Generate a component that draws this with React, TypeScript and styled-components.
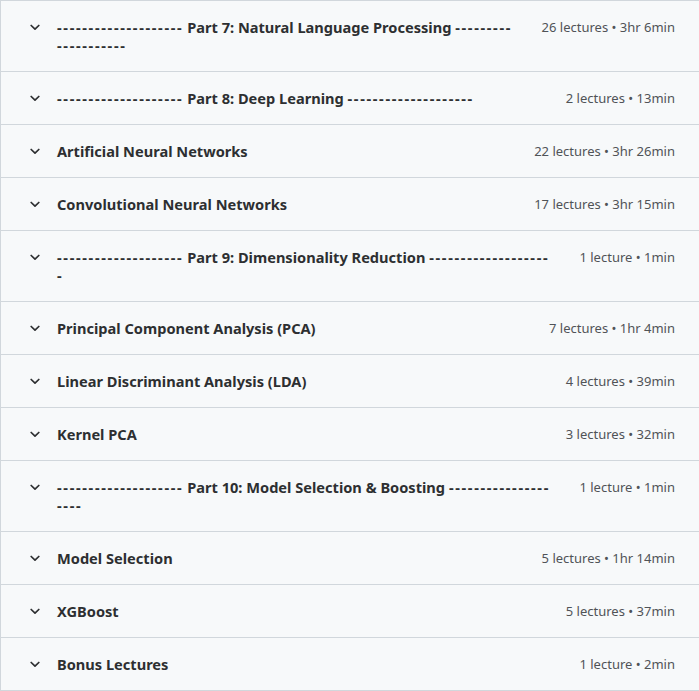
import React from "react";
import styled, { createGlobalStyle } from "styled-components";

const Global = createGlobalStyle`
  html, body { margin: 0; padding: 0; background: #ffffff; }
  body { font-family: "Noto Sans", "Open Sans", sans-serif; }
`;

const List = styled.div`
  width: 699px;
  box-sizing: border-box;
  border-top: 1px solid #d1d7dc;
  border-left: 1px solid #d1d7dc;
  background: #f7f9fa;
`;

const Row = styled.div`
  display: flex;
  align-items: flex-start;
  box-sizing: border-box;
  padding: 17px 24px 17px 29px;
  border-bottom: 1px solid #d1d7dc;
`;

const Chevron = styled.span`
  flex: 0 0 10px;
  height: 18px;
  margin-right: 17px;
  display: flex;
  align-items: center;
  justify-content: center;
  color: #2d2f31;
`;

const Title = styled.div`
  flex: 1 1 auto;
  min-width: 0;
  font-size: 14.6px;
  line-height: 18px;
  font-weight: 700;
  color: #2d2f31;
  word-break: break-all;
`;

const Rule = styled.span`
  letter-spacing: 1.65px;
`;

const Meta = styled.div`
  flex: 0 0 auto;
  margin-left: 25px;
  font-size: 13px;
  line-height: 18px;
  color: #505357;
  white-space: nowrap;
`;

const D = "--------------------";

const sections: [string, string][] = [
  [`${D} Part 7: Natural Language Processing ${D}`, "26 lectures • 3hr 6min"],
  [`${D} Part 8: Deep Learning ${D}`, "2 lectures • 13min"],
  ["Artificial Neural Networks", "22 lectures • 3hr 26min"],
  ["Convolutional Neural Networks", "17 lectures • 3hr 15min"],
  [`${D} Part 9: Dimensionality Reduction ${D}`, "1 lecture • 1min"],
  ["Principal Component Analysis (PCA)", "7 lectures • 1hr 4min"],
  ["Linear Discriminant Analysis (LDA)", "4 lectures • 39min"],
  ["Kernel PCA", "3 lectures • 32min"],
  [`${D} Part 10: Model Selection & Boosting ${D}`, "1 lecture • 1min"],
  ["Model Selection", "5 lectures • 1hr 14min"],
  ["XGBoost", "5 lectures • 37min"],
  ["Bonus Lectures", "1 lecture • 2min"],
];

const ChevronIcon = () => (
  <svg width="10" height="7" viewBox="0 0 10 7" fill="none">
    <path d="M1.2 1.5 L5 5.2 L8.8 1.5" stroke="currentColor" strokeWidth="1.7" strokeLinecap="round" strokeLinejoin="round" />
  </svg>
);

const renderTitle = (t: string) =>
  t.split(/(-{2,})/).map((part, i) =>
    /^-{2,}$/.test(part) ? <Rule key={i}>{part}</Rule> : <React.Fragment key={i}>{part}</React.Fragment>
  );

export default function App() {
  return (
    <>
      <Global />
      <List>
        {sections.map(([t, m], i) => (
          <Row key={i}>
            <Chevron><ChevronIcon /></Chevron>
            <Title>{renderTitle(t)}</Title>
            <Meta>{m}</Meta>
          </Row>
        ))}
      </List>
    </>
  );
}
